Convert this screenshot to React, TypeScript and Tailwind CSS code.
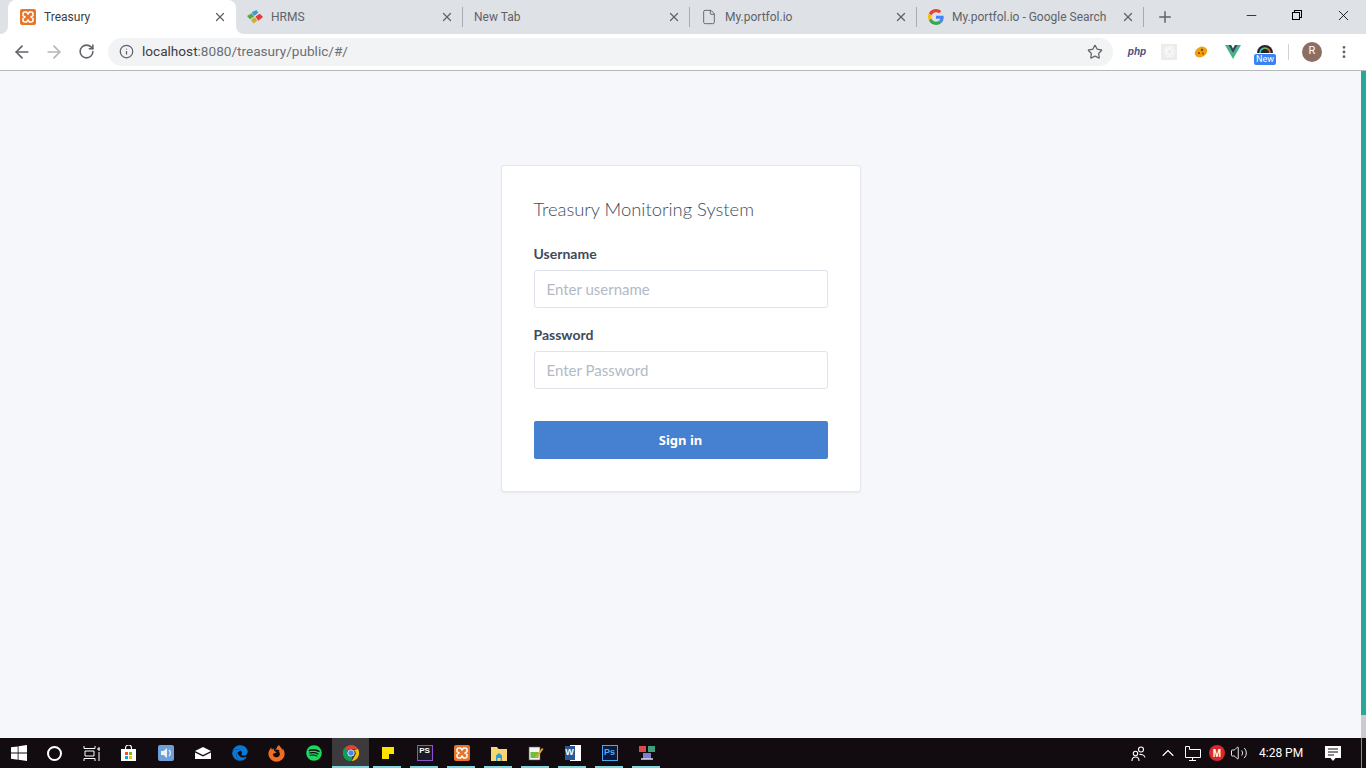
import { ArrowLeft, ArrowRight, ChevronUp, File, Info, Minus, MoreVertical, Plus, RotateCw, Star, Volume2, X } from "lucide-react";
import { FaEdge, FaFirefoxBrowser, FaSpotify } from "react-icons/fa";
import type { ReactNode } from "react";

function XamppIcon({ size = 16 }: { size?: number }) {
  return (
    <svg width={size} height={size} viewBox="0 0 16 16">
      <rect width="16" height="16" rx="2" fill="#e8742a" />
      <path
        d="M5 3h1.500L8 5l1.500-2H11a2 2 0 0 1 2 2v1.500L11 8l2 1.500V11a2 2 0 0 1-2 2H9.500L8 11l-1.500 2H5a2 2 0 0 1-2-2V9.500L5 8 3 6.500V5a2 2 0 0 1 2-2z"
        fill="none"
        stroke="#fff"
        strokeWidth="1.500"
      />
    </svg>
  );
}

function HrmsIcon() {
  return (
    <svg width="17" height="16" viewBox="0 0 17 16">
      <path d="M0 7l5-3 2.500 3.500-4.500 3z" fill="#5aa845" />
      <path d="M5 3l5-2.500 2 3-4.500 3.500z" fill="#3a9bd5" />
      <path d="M4 11l4.500-3 2.500 4-4 3z" fill="#c9b23a" />
      <path d="M9 7.500l4.500-3L17 8l-5 4z" fill="#e53935" />
    </svg>
  );
}

function GoogleIcon() {
  return (
    <svg width="16" height="16" viewBox="0 0 48 48">
      <path fill="#EA4335" d="M24 9.500c3.500 0 6.700 1.200 9.200 3.600l6.900-6.900C35.900 2.400 30.500 0 24 0 14.600 0 6.500 5.400 2.600 13.200l8 6.200C12.400 13.700 17.700 9.500 24 9.500z" />
      <path fill="#4285F4" d="M47 24.500c0-1.600-.1-3.100-.4-4.500H24v9h13c-.6 3-2.300 5.500-4.800 7.200l7.700 6c4.500-4.200 7.100-10.300 7.100-17.700z" />
      <path fill="#FBBC05" d="M10.600 28.600c-.5-1.400-.8-3-.8-4.600s.3-3.200.8-4.600l-8-6.200C.9 16.500 0 20.100 0 24s.9 7.500 2.600 10.800z" />
      <path fill="#34A853" d="M24 48c6.500 0 11.900-2.100 15.900-5.800l-7.700-6c-2.200 1.400-4.900 2.300-8.200 2.300-6.300 0-11.600-4.200-13.400-9.900l-8 6.200C6.500 42.600 14.600 48 24 48z" />
    </svg>
  );
}

function ChromeIcon() {
  return (
    <svg width="16" height="16" viewBox="0 0 16 16">
      <path d="M8 0a8 8 0 0 1 7 4H8a4 4 0 0 0-3.700 2.400L2 2.600A8 8 0 0 1 8 0z" fill="#db4437" />
      <path d="M15 4a8 8 0 0 1-6.200 12L12 10.500A4 4 0 0 0 11 5z" fill="#f4c20d" />
      <path d="M8.800 16A8 8 0 0 1 2 2.600l3.500 6A4 4 0 0 0 9 12z" fill="#0f9d58" />
      <circle cx="8" cy="8" r="3.200" fill="#4285f4" stroke="#fff" strokeWidth="0.800" />
    </svg>
  );
}

type Tab = { title: string; icon?: ReactNode };

const tabs: Tab[] = [
  { title: "HRMS", icon: <HrmsIcon /> },
  { title: "New Tab" },
  { title: "My.portfol.io", icon: <File size={16} strokeWidth={1.4} className="text-[#5f6368]" /> },
  { title: "My.portfol.io - Google Search", icon: <GoogleIcon /> },
];

function TabStrip() {
  return (
    <div className="flex h-[34px] bg-[#dee1e6] pl-2">
      {/* Active tab */}
      <div className="relative flex h-[34px] w-[228px] items-center rounded-t-[8px] bg-white pl-3 pr-[9px]">
        <div className="absolute -left-2 bottom-0 h-2 w-2 bg-white">
          <div className="h-2 w-2 rounded-br-[8px] bg-[#dee1e6]" />
        </div>
        <div className="absolute -right-2 bottom-0 h-2 w-2 bg-white">
          <div className="h-2 w-2 rounded-bl-[8px] bg-[#dee1e6]" />
        </div>
        <XamppIcon />
        <span className="ml-2 flex-1 font-['Roboto',sans-serif] text-[12px] text-[#3c4043]">Treasury</span>
        <X size={14} strokeWidth={2.2} className="text-[#5f6368]" />
      </div>
      {tabs.map((tab) => (
        <div key={tab.title} className="flex h-[34px] w-[227px] items-center pb-px pl-[11px]">
          {tab.icon && <span className="mr-2 flex w-4 justify-center">{tab.icon}</span>}
          <span className="flex-1 whitespace-nowrap font-['Roboto',sans-serif] text-[12px] text-[#5f6368]">{tab.title}</span>
          <X size={14} strokeWidth={2.2} className="text-[#5f6368]" />
          <div className="ml-[8px] h-5 w-px bg-[#a9acb0]" />
        </div>
      ))}
      <div className="flex w-[42px] items-center justify-center">
        <Plus size={18} strokeWidth={2} className="text-[#5f6368]" />
      </div>
      <div className="ml-auto flex">
        <div className="flex h-[30px] w-[46px] items-center justify-center">
          <Minus size={15} strokeWidth={1.2} className="text-black" />
        </div>
        <div className="flex h-[30px] w-[46px] items-center justify-center">
          <div className="relative h-[10px] w-[10px]">
            <div className="absolute left-[2px] top-0 h-2 w-2 border border-black" />
            <div className="absolute bottom-0 left-0 h-2 w-2 border border-black bg-[#dee1e6]" />
          </div>
        </div>
        <div className="flex h-[30px] w-[46px] items-center justify-center">
          <X size={17} strokeWidth={1.2} className="text-black" />
        </div>
      </div>
    </div>
  );
}

function Toolbar() {
  return (
    <div className="flex h-[37px] items-center border-b border-[#b8b8bc] bg-white pb-px">
      <div className="flex w-[108px] items-center pl-[6px]">
        <span className="flex w-8 justify-center"><ArrowLeft size={20} strokeWidth={2} className="text-[#5f6368]" /></span>
        <span className="flex w-8 justify-center"><ArrowRight size={20} strokeWidth={2} className="text-[#b4b6b9]" /></span>
        <span className="flex w-8 justify-center"><RotateCw size={17} strokeWidth={2.2} className="text-[#5f6368]" /></span>
      </div>
      <div className="flex h-7 w-[1005px] items-center rounded-full bg-[#f1f3f4] pl-[11px] pr-[10px]">
        <Info size={15} strokeWidth={2} className="text-[#5f6368]" />
        <span className="ml-[8px] flex-1 font-['Roboto',sans-serif] text-[13.600px] text-[#6b6f73]">
          <span className="text-[#3c4043]">localhost</span>:8080/treasury/public/#/
        </span>
        <Star size={16} strokeWidth={1.8} className="text-[#5f6368]" />
      </div>
      <div className="flex items-center pl-2">
        <span className="flex w-8 justify-center font-['Liberation_Sans',sans-serif] text-[10px] font-bold italic text-[#4a4f82]">php</span>
        <span className="flex w-8 justify-center">
          <span className="flex h-4 w-4 items-center justify-center bg-[#ececec]">
            <svg width="13" height="13" viewBox="0 0 16 16" fill="none" stroke="#fafafa" strokeWidth="1.200">
              <ellipse cx="8" cy="8" rx="7" ry="3" />
              <ellipse cx="8" cy="8" rx="7" ry="3" transform="rotate(60 8 8)" />
              <ellipse cx="8" cy="8" rx="7" ry="3" transform="rotate(120 8 8)" />
            </svg>
          </span>
        </span>
        <span className="flex w-8 justify-center">
          <svg width="14" height="14" viewBox="0 0 14 14">
            <ellipse cx="7" cy="7" rx="6.500" ry="5" transform="rotate(-30 7 7)" fill="#f0a010" />
            <circle cx="8" cy="5" r="1.200" fill="#7a4a10" />
            <circle cx="5" cy="8" r="1.100" fill="#7a4a10" />
            <circle cx="9" cy="8.500" r="0.900" fill="#7a4a10" />
          </svg>
        </span>
        <span className="flex w-8 justify-center">
          <svg width="16" height="14" viewBox="0 0 16 14">
            <path d="M0 0h3.200L8 8.200 12.800 0H16L8 14z" fill="#41b883" />
            <path d="M3.200 0h2.900L8 3.400 9.900 0h2.900L8 8.200z" fill="#35495e" />
          </svg>
        </span>
        <span className="relative flex h-6 w-8 justify-center">
          <svg width="16" height="10" viewBox="0 0 16 10" className="mt-[3px]">
            <path d="M0 10a8 8 0 0 1 16 0z" fill="#23262b" />
            <path d="M3 10a5 5 0 0 1 3-4.500" fill="none" stroke="#3ec6c0" strokeWidth="1.400" />
            <path d="M6 5.500a5 5 0 0 1 4 0" fill="none" stroke="#8bc34a" strokeWidth="1.400" />
            <path d="M10 5.500a5 5 0 0 1 3 4.500" fill="none" stroke="#ef6c3a" strokeWidth="1.400" />
          </svg>
          <span className="absolute bottom-[-1px] left-[5px] rounded-[2px] bg-[#3b82f0] px-[2px] font-['Roboto',sans-serif] text-[9px] leading-[11px] text-white">New</span>
        </span>
        <div className="ml-[7px] h-4 w-px bg-[#d0d2d5]" />
        <div className="ml-[13px] flex h-5 w-5 items-center justify-center rounded-full bg-[#8d6e63] font-['Roboto',sans-serif] text-[11px] text-white">R</div>
        <MoreVertical size={16} strokeWidth={2.2} className="ml-[14px] text-[#5f6368]" />
      </div>
    </div>
  );
}

function Field({ label, placeholder, type }: { label: string; placeholder: string; type: string }) {
  return (
    <div>
      <label className="mb-[6px] block font-['Lato',sans-serif] text-[14px] font-bold leading-[21px] text-[#3e4b5b]">{label}</label>
      <input
        type={type}
        placeholder={placeholder}
        readOnly
        className="block h-[38px] w-full rounded-[3px] border border-[#dfe3ec] bg-white px-3 font-['Lato',sans-serif] text-[15px] outline-none placeholder:text-[#b3bac6]"
      />
    </div>
  );
}

function LoginCard() {
  return (
    <div className="w-[360px] rounded-[3px] border border-[#e4e7ef] bg-white px-8 pb-8 pt-[30px] shadow-[0_1px_2px_rgba(0,0,0,0.06)]">
      <h1 className="mb-5 font-['Lato',sans-serif] text-[18.400px] font-light leading-[26px] text-[#3e4b5b]">Treasury Monitoring System</h1>
      <div className="mt-[21px] flex flex-col gap-[16px]">
        <Field label="Username" placeholder="Enter username" type="text" />
        <Field label="Password" placeholder="Enter Password" type="password" />
      </div>
      <button className="mt-8 h-[38px] w-full rounded-[2px] bg-[#4680d1] pt-px text-[13px] font-bold text-white">Sign in</button>
    </div>
  );
}

function WindowsLogo() {
  return (
    <svg width="16" height="16" viewBox="0 0 16 16" fill="#fff">
      <path d="M0 2.300l6.700-.9v6.200H0zM7.500 1.300L16 0v7.600H7.500zM0 8.400h6.700v6.300L0 13.800zM7.500 8.400H16V16l-8.500-1.200z" />
    </svg>
  );
}

const leftApps: ReactNode[] = [
  <span key="cortana" className="block h-[15px] w-[15px] rounded-full border-2 border-white" />,
  <svg key="view" width="17" height="15" viewBox="0 0 17 15" fill="none" stroke="#fff" strokeWidth="1">
    <path d="M1 0v2.500M12 0v2.500M1 2.500h11M2 5h9v5H2zM1 12.500h11M1 12.500V15M12 12.500V15" />
    <path d="M15 2h2v2h-2zM16 6v9" />
  </svg>,
  <svg key="store" width="15" height="16" viewBox="0 0 15 16">
    <path d="M0 4h15v12H0z" fill="#fff" />
    <path d="M4.500 5V3a3 3 0 0 1 6 0v2" fill="none" stroke="#fff" strokeWidth="1.200" />
    <rect x="4" y="7" width="3" height="3" fill="#f25022" />
    <rect x="8" y="7" width="3" height="3" fill="#7fba00" />
    <rect x="4" y="11" width="3" height="3" fill="#00a4ef" />
    <rect x="8" y="11" width="3" height="3" fill="#ffb900" />
  </svg>,
  <svg key="sound" width="16" height="16" viewBox="0 0 16 16">
    <rect width="16" height="16" rx="2" fill="#6f9fd8" />
    <path d="M3 6h2.500L9 3v10L5.500 10H3z" fill="#eaf2fb" />
    <path d="M11 5a4 4 0 0 1 0 6" fill="none" stroke="#eaf2fb" strokeWidth="1.200" />
  </svg>,
  <svg key="mail" width="16" height="12" viewBox="0 0 16 12" fill="#fff">
    <path d="M0 4l8-4 8 4-8 4z" />
    <path d="M0 5.500l8 4 8-4V12H0z" />
  </svg>,
  <FaEdge key="edge" size={16} className="text-[#0a78d7]" />,
  <FaFirefoxBrowser key="firefox" size={17} className="text-[#f26b21]" />,
  <FaSpotify key="spotify" size={16} className="text-[#1ed760]" />,
];

const runningApps: ReactNode[] = [
  <span key="notes" className="relative block h-3 w-3 bg-[#fde400]">
    <span className="absolute bottom-0 right-0 block h-[5px] w-[5px] bg-[#111]" />
  </span>,
  <span key="storm" className="flex h-4 w-4 items-start justify-center border border-[#8b4fd8] bg-[#1a1a24] font-['Liberation_Sans',sans-serif] text-[8px] font-bold leading-[10px] text-white">PS</span>,
  <XamppIcon key="xampp" />,
  <svg key="folder" width="16" height="15" viewBox="0 0 16 15">
    <path d="M0 1h6l1.500 2H16v12H0z" fill="#f7d774" />
    <path d="M5 9.500l3-2.500 3 2.500V15H9.500v-3h-3v3H5z" fill="#2a9fd8" />
  </svg>,
  <svg key="notepad" width="16" height="16" viewBox="0 0 16 16">
    <rect x="1" y="2" width="11" height="13" fill="#f4f4f0" stroke="#555" strokeWidth="0.600" />
    <rect x="2.500" y="7" width="8" height="6" fill="#6ebd45" />
    <path d="M7 12L14 3l1.500 1L9 13z" fill="#e2a52a" />
  </svg>,
  <span key="word" className="relative flex h-4 w-4 justify-end">
    <span className="block h-4 w-[11px] bg-white" />
    <span className="absolute left-0 top-[1px] flex h-[14px] w-[10px] items-center justify-center bg-[#2b579a] font-['Liberation_Sans',sans-serif] text-[9px] font-bold text-white">W</span>
  </span>,
  <span key="ps" className="flex h-4 w-4 items-center justify-center border border-[#4fa8ef] bg-[#0b1a3a] font-['Liberation_Sans',sans-serif] text-[9px] font-bold text-[#4fa8ef]">Ps</span>,
  <svg key="net" width="16" height="16" viewBox="0 0 16 16">
    <rect x="0" y="1" width="7" height="6" fill="#d94b4b" />
    <rect x="9" y="1" width="7" height="6" fill="#3f9f7f" />
    <rect x="4" y="8" width="8" height="6" fill="#7d7fd0" />
    <path d="M2 14h12" stroke="#d8d8e8" strokeWidth="1.500" />
  </svg>,
];

function Taskbar() {
  return (
    <div className="flex h-[30px] items-stretch bg-[#120c10]">
      <div className="flex w-[36px] items-center justify-center pl-[2px]"><WindowsLogo /></div>
      {leftApps.map((icon, i) => (
        <div key={i} className="flex w-[37px] items-center justify-center">{icon}</div>
      ))}
      <div className="relative flex w-[37px] items-center justify-center bg-[#3c3a3c]">
        <ChromeIcon />
        <div className="absolute inset-x-0 bottom-0 h-[2px] bg-[#7fd6dc]" />
      </div>
      {runningApps.map((icon, i) => (
        <div key={i} className="relative flex w-[37px] items-center justify-center">
          {icon}
          <div className="absolute bottom-0 left-[4px] right-[5px] h-[2px] bg-[#7fd6dc]" />
        </div>
      ))}
      <div className="ml-auto flex items-center text-white">
        <svg width="15" height="15" viewBox="0 0 15 15" fill="none" stroke="#fff" strokeWidth="1.100">
          <circle cx="10" cy="3.500" r="2.500" />
          <circle cx="4.500" cy="7.500" r="2.200" />
          <path d="M1 15c0-2.500 1.500-4 3.500-4s3.500 1.500 3.500 4M8.500 8.500c2-.5 5 .5 5.500 3" />
        </svg>
        <ChevronUp size={20} strokeWidth={1.3} className="ml-[12px]" />
        <svg width="17" height="15" viewBox="0 0 17 15" fill="none" stroke="#fff" className="ml-[6px]">
          <path d="M1.500.500h4v3h11v8h-15zM5 14.500h7M8.500 11.500v3" />
        </svg>
        <span className="ml-[8px] flex h-4 w-4 items-center justify-center rounded-full bg-[#d9272e] font-['Liberation_Sans',sans-serif] text-[10px] font-bold">M</span>
        <Volume2 size={18} strokeWidth={1.2} className="ml-[5px]" />
        <span className="ml-[11px] w-[43px] whitespace-nowrap font-['Roboto',sans-serif] text-[12px]">4:28 PM</span>
        <svg width="16" height="15" viewBox="0 0 16 15" className="ml-[23px]">
          <path d="M0 0h16v12h-5.500L8 15l-2.500-3H0z" fill="#fff" />
          <path d="M3 3h10M3 6h10M3 9h6" stroke="#120c10" />
        </svg>
        <div className="ml-[20px] h-full w-[5px] border-l border-[#8a8a8a]" />
      </div>
    </div>
  );
}

export default function App() {
  return (
    <div className="flex h-[768px] w-[1366px] flex-col overflow-hidden font-['Noto_Sans',sans-serif]">
      <TabStrip />
      <Toolbar />
      <div className="flex flex-1 bg-[#f5f7fb]">
        <div className="flex flex-1 items-start justify-center pt-[94px]">
          <LoginCard />
        </div>
        {/* page scrollbar */}
        <div className="flex w-[5px] flex-col">
          <div className="flex-1 bg-[#2aa79b]" />
          <div className="h-[23px] bg-[#c9cbce]" />
        </div>
      </div>
      <Taskbar />
    </div>
  );
}
